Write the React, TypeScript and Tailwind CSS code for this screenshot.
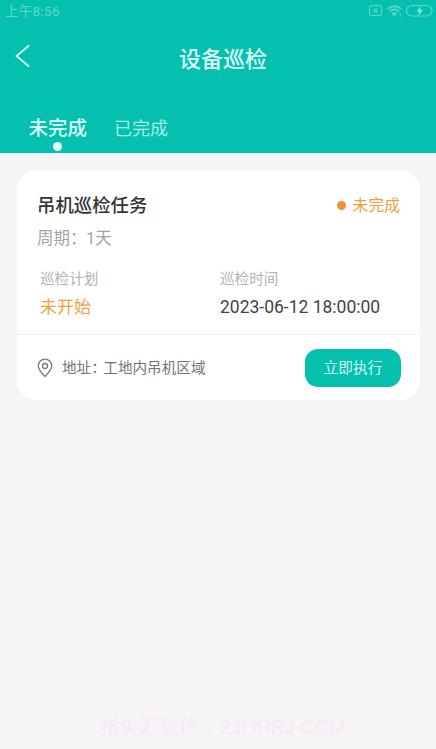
function StatusIcons() {
  return (
    <svg className="mt-[4px] h-[14px] w-[70px]" viewBox="0 0 70 14" fill="none" stroke="#5fd8ca" strokeWidth="1.1">
      <rect x="6.500" y="1.500" width="12" height="10" rx="2.500" />
      <path d="M10.500 4.500l4 4M14.500 4.500l-4 4" />
      <path d="M24.500 4.800q6.800-5.400 13.600 0M26.700 7.300q4.600-3.800 9.200 0" strokeWidth="1.600" />
      <path d="M28.600 9.300q2.700-2 5.400 0l-2.700 3z" fill="#5fd8ca" stroke="none" />
      <path d="M37.300 9.500v3" />
      <rect x="43.500" y="1.500" width="25.500" height="10.500" rx="5.250" />
      <path d="M58 2l-4.500 5.400h2.800L55 12l5-5.800h-2.900z" fill="#8ce8dc" stroke="none" />
    </svg>
  );
}

function Header() {
  return (
    <header className="flex h-[153px] flex-col bg-[#06c0af]">
      <div className="flex h-6 items-start justify-between pl-[5px] pr-[3px]">
        <span className="text-[13.500px] leading-[23px] tracking-[0.300px] text-[#5fd8ca]">上午8:56</span>
        <StatusIcons />
      </div>
      <div className="grid h-[68px] grid-cols-[60px_1fr_60px] items-center">
        <svg className="ml-[14px] h-6 w-[18px] -translate-y-[2px]" viewBox="0 0 18 24" fill="none" stroke="#d6fff8" strokeWidth="1.800">
          <path d="M15 1.500L2.500 12L15 22.500" />
        </svg>
        <h1 className="pl-[10px] pt-[4px] text-center text-[22px] font-medium leading-[32px] text-[#dcfff9]">设备巡检</h1>
      </div>
      <nav className="flex gap-[27px] pl-[28.500px] pt-[23px]">
        <div className="flex flex-col items-center">
          <span className="text-[19.500px] font-medium leading-[28px] text-[#dcfff9]">未完成</span>
          <i className="-mt-[1px] size-[9px] rounded-full bg-[#e6fffb]" />
        </div>
        <span className="text-[18px] leading-[28px] text-[#a5efe5]">已完成</span>
      </nav>
    </header>
  );
}

function PinIcon() {
  return (
    <svg className="h-5 w-4" viewBox="0 0 16 20" fill="none" stroke="#777" strokeWidth="1.300">
      <path d="M8 18.500C5 15.500 1.300 11.500 1.300 7.800a6.700 6.700 0 0 1 13.400 0C14.700 11.500 11 15.500 8 18.500z" />
      <circle cx="8" cy="8" r="2.500" />
    </svg>
  );
}

function TaskCard() {
  return (
    <section className="mx-[17px] mt-[17px] h-[230px] w-[403px] rounded-[20px] bg-white">
      <div className="h-[165px] border-b border-[#f0f0f0] pl-[20px] pt-[22px]">
        <div className="flex h-7 items-center justify-between pr-[20px]">
          <h2 className="text-[18.400px] font-medium text-[#333]">吊机巡检任务</h2>
          <span className="flex items-center gap-[7px] text-[15.800px] text-[#eda23f]">
            <i className="-mt-[2px] size-[9px] rounded-full bg-[#f09030]" />
            未完成
          </span>
        </div>
        <p className="mt-[7px] text-[16.500px] leading-6 text-[#a3a3a3]">周期<span className="tracking-[-0.500px]">：</span>1天</p>
        <dl className="mt-[18px] grid grid-cols-[180px_1fr] pl-[3px]">
          <dt className="text-[14.600px] leading-5 text-[#b3b3b3]">巡检计划</dt>
          <dt className="text-[14.600px] leading-5 text-[#b3b3b3]">巡检时间</dt>
          <dd className="mt-[6px] text-[17px] leading-6 text-[#eda23f]">未开始</dd>
          <dd className="mt-[6px] whitespace-nowrap text-[17.500px] leading-6 text-[#444]">2023-06-12 18:00:00</dd>
        </dl>
      </div>
      <div className="flex h-[65px] items-center pl-[20px] pr-[19px]">
        <PinIcon />
        <span className="ml-[9px] pt-[3px] text-[14.600px] text-[#747474]">地址<span className="tracking-[-2.500px]">：</span>工地内吊机区域</span>
        <button className="ml-auto h-[38px] w-[96px] rounded-[13px] bg-[#06c0af] pt-[2px] text-[14.700px] text-[#cffbf4]">立即执行</button>
      </div>
    </section>
  );
}

export default function App() {
  return (
    <main className="flex h-[749px] w-[436px] flex-col overflow-hidden bg-[#f5f5f5] font-[Roboto,'Noto_Sans_CJK_SC',sans-serif]">
      <Header />
      <TaskCard />
      <footer className="mt-auto flex h-[42px] items-center whitespace-pre pl-[100px] text-[19.800px] text-[#fae7fa] font-['Liberation_Sans','Noto_Sans_CJK_SC',sans-serif]">
        指尖汇软件<span className="w-[21px] text-center">·</span>ZJHHRJ.COM
      </footer>
    </main>
  );
}
